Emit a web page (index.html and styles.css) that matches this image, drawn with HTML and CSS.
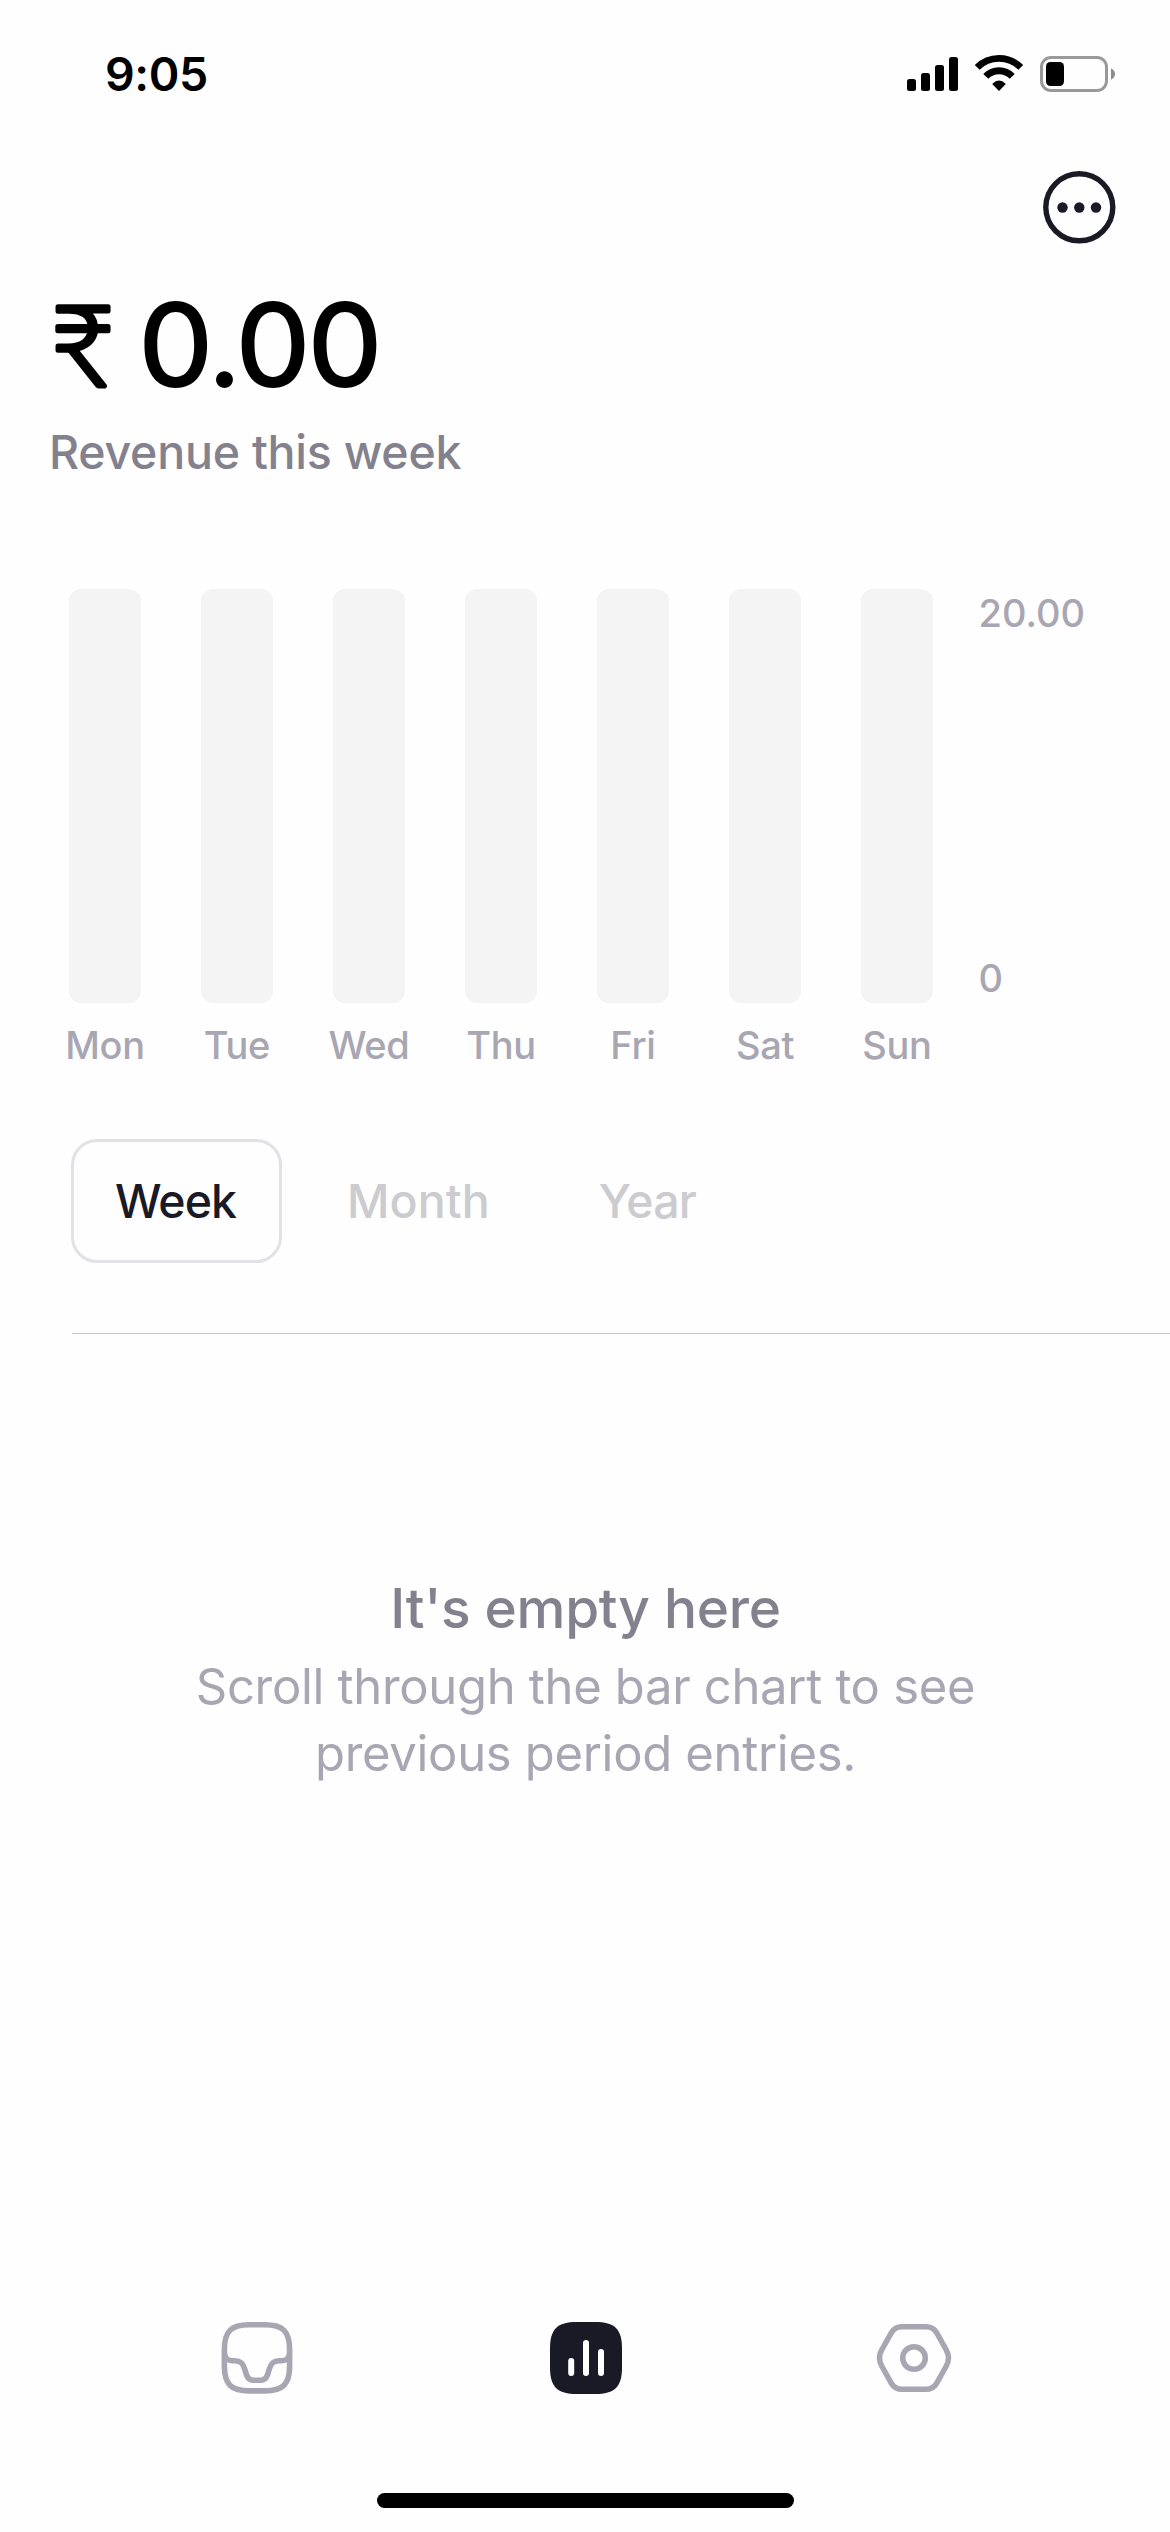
FILE: index.html
```html
<!DOCTYPE html>
<html lang="en">
<head>
<meta charset="utf-8">
<title>Revenue</title>
<link rel="stylesheet" href="styles.css">
</head>
<body>
<header class="status">
  <span class="time">9:05</span>
  <svg class="status-icons" viewBox="0 0 220 48" width="220" height="48">
    <rect x="7" y="29" width="9" height="12" rx="2.5"/>
    <rect x="21" y="23" width="9" height="18" rx="2.5"/>
    <rect x="35" y="15" width="9" height="26" rx="2.5"/>
    <rect x="49" y="7" width="9" height="34" rx="2.5"/>
    <path d="M77.2 17.400A30.800 30.800 0 0 1 120.800 17.400" fill="none" stroke="#000" stroke-width="6.8"/>
    <path d="M85.800 26.4A18.200 18.200 0 0 1 112.200 26.4" fill="none" stroke="#000" stroke-width="7"/>
    <path d="M92.2 33.9Q99 27 105.8 33.9L99 41Z"/>
    <rect x="141.5" y="7.5" width="65" height="33" rx="9.5" fill="none" stroke="#999" stroke-width="3"/>
    <rect x="146" y="12" width="18" height="24" rx="4.5"/>
    <path d="M211 18.3Q215 20.500 215 24T211 29.700Z" fill="#8c8c8c"/>
  </svg>
</header>
<div class="toolbar">
  <svg viewBox="0 0 73 73" width="73" height="73">
    <circle cx="36.300" cy="36.300" r="33.500" fill="none" stroke="#1a1926" stroke-width="5.400"/>
    <g fill="#1a1926"><circle cx="19.500" cy="36.500" r="5.200"/><circle cx="36.300" cy="36.500" r="5.200"/><circle cx="53" cy="36.500" r="5.200"/></g>
  </svg>
</div>
<main>
  <section class="summary">
    <h1 class="amount">
      <svg class="currency" width="94" height="110"><text x="1" y="95.500">₹</text></svg>
      <span>0.00</span>
    </h1>
    <p class="caption">Revenue this week</p>
  </section>
  <section class="chart">
    <div class="day"><div class="bar"></div><span>Mon</span></div>
    <div class="day"><div class="bar"></div><span>Tue</span></div>
    <div class="day"><div class="bar"></div><span>Wed</span></div>
    <div class="day"><div class="bar"></div><span>Thu</span></div>
    <div class="day"><div class="bar"></div><span>Fri</span></div>
    <div class="day"><div class="bar"></div><span>Sat</span></div>
    <div class="day"><div class="bar"></div><span>Sun</span></div>
    <div class="axis"><span>20.00</span><span>0</span></div>
  </section>
  <div class="periods">
    <button class="period active">Week</button>
    <button class="period month">Month</button>
    <button class="period">Year</button>
  </div>
  <section class="empty">
    <h2>It's empty here</h2>
    <p>Scroll through the bar chart to see<br>previous period entries.</p>
  </section>
</main>
<nav class="tabs">
  <svg viewBox="0 0 84 84" width="84" height="84" fill="none" stroke="#a8a6b2" stroke-width="5.600">
    <path d="M34 8.800H50C68 8.800 74.600 15.400 74.600 33.500V50C74.600 68.200 68 74.900 50 74.900H34C16 74.900 9.400 68.200 9.400 50V33.500C9.400 15.400 16 8.800 34 8.800Z"/>
    <path d="M9.500 38Q11 44.700 17 44.700H20C26 44.700 28.500 48 30 54C31.500 60 33 64.300 38.500 64.300H45.500C51 64.300 52.500 60 54 54C55.500 48 58 44.700 64 44.700H67Q73 44.700 74.500 38"/>
  </svg>
  <svg viewBox="0 0 84 84" width="84" height="84">
    <path d="M33 6H51C71 6 78 13 78 33V51C78 71 71 78 51 78H33C13 78 6 71 6 51V33C6 13 13 6 33 6Z" fill="#1a1926"/>
    <g fill="#fff"><rect x="24.200" y="42" width="6" height="18" rx="3"/><rect x="39" y="24" width="6" height="36" rx="3"/><rect x="54" y="33" width="6" height="27" rx="3"/></g>
  </svg>
  <svg viewBox="0 0 84 84" width="84" height="84" fill="none" stroke="#a8a6b2" stroke-width="5.500">
    <path d="M30 10.700H54Q61 10.700 64.500 16.500L74 33.500Q79 42 74 50.500L64.500 67.500Q61 73.300 54 73.300H30Q23 73.300 19.500 67.500L10 50.500Q5 42 10 33.500L19.500 16.500Q23 10.700 30 10.700Z"/>
    <circle cx="42" cy="42" r="11.300"/>
  </svg>
</nav>
<div class="home"></div>
</body>
</html>
```
FILE: styles.css
```css
* { box-sizing: border-box; margin: 0; padding: 0; }
body {
  width: 1170px;
  height: 2532px;
  display: flex;
  flex-direction: column;
  background: #fefefe;
  font-family: Inter, "Liberation Sans", sans-serif;
  font-weight: 500;
  overflow: hidden;
}
svg { display: block; }
.status {
  height: 148px;
  padding: 0 50px 0 105px;
  display: flex;
  align-items: center;
  justify-content: space-between;
}
.time { font-size: 46.5px; font-weight: 600; line-height: 60px; letter-spacing: -0.4px; }
.toolbar { display: flex; justify-content: flex-end; padding: 23px 54px 0 0; }
.summary { padding: 46px 49px 0; }
.amount {
  display: flex;
  height: 110px;
  font-size: 117px;
  font-weight: 500;
  line-height: 110px;
  letter-spacing: -3.7px;
}
.currency { flex: none; margin-right: -5px; overflow: visible; }
.currency text {
  font: 300 112px Lato, Inter, sans-serif;
  letter-spacing: 0;
  stroke: #000;
  stroke-width: 5px;
  stroke-linejoin: round;
}
.caption {
  margin-top: 22px;
  font-size: 46.5px;
  line-height: 60px;
  letter-spacing: -0.23px;
  color: #83818d;
}
.chart {
  display: flex;
  margin-top: 107px;
  padding-left: 39px;
  font-size: 38px;
  line-height: 46px;
  letter-spacing: -0.3px;
  color: #a8a6b2;
}
.day { width: 132px; display: flex; flex-direction: column; align-items: center; gap: 19px; }
.bar { width: 72px; height: 414px; border-radius: 12px; background: #f4f4f4; }
.axis {
  display: flex;
  flex-direction: column;
  justify-content: space-between;
  height: 411px;
  margin: 1px 0 0 15.5px;
  letter-spacing: 0;
}
.periods {
  display: flex;
  gap: 21px;
  margin: 71px 0 0 71px;
  padding-bottom: 70px;
}
.period {
  height: 124px;
  padding: 0 41px;
  border: 3px solid transparent;
  border-radius: 26px;
  background: none;
  font: 500 46.5px/60px Inter, "Liberation Sans", sans-serif;
  letter-spacing: -0.9px;
  color: #cbcbd0;
}
.month { letter-spacing: 0.1px; }
.active { width: 211px; padding: 0 2px 0 0; border-color: #e1e1e6; color: #1a1926; letter-spacing: -1px; }
.empty {
  margin-left: 72px;
  padding: 241px 71px 0 0;
  border-top: 1px solid #c6c6c8;
  text-align: center;
}
.empty h2 {
  font-size: 55px;
  font-weight: 500;
  line-height: 66px;
  letter-spacing: -0.31px;
  color: #83818d;
}
.empty p {
  margin-top: 12px;
  font-size: 49px;
  font-weight: 400;
  line-height: 67px;
  letter-spacing: -0.32px;
  color: #a8a6b2;
}
.tabs {
  display: grid;
  grid-template-columns: 330px 328px 328px;
  justify-items: center;
  margin: auto 0 0 92px;
}
.home { flex: none; width: 417px; height: 15px; margin: 93px 0 24px 377px; border-radius: 8px; background: #000; }
```
